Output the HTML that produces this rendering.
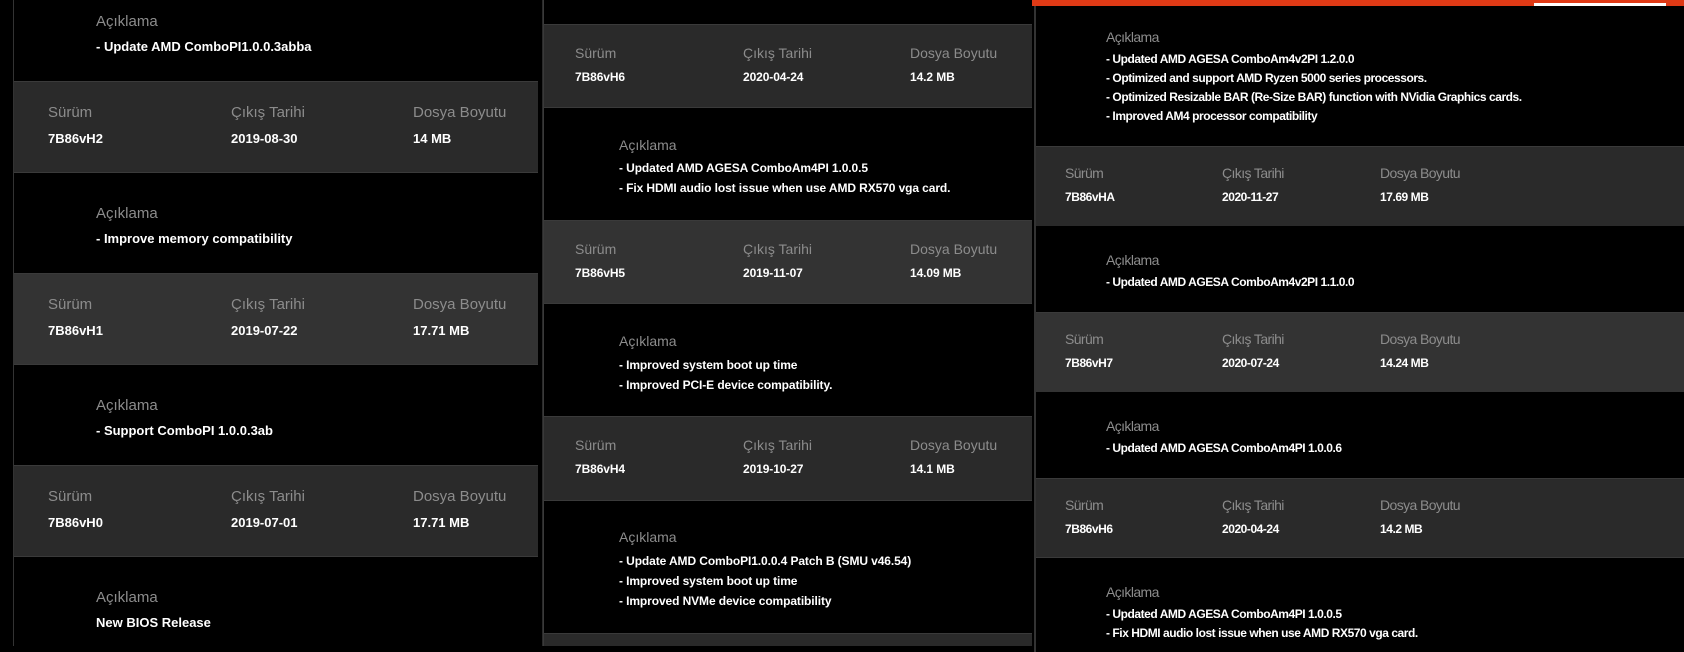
<!DOCTYPE html>
<html><head><meta charset="utf-8"><style>
*{margin:0;padding:0;box-sizing:border-box}
body{width:1684px;height:646px;background:#000;overflow:hidden;position:relative;font-family:"Liberation Sans",sans-serif}
.r{position:absolute;border-top:1px solid #3a3a3a}
.g{background:#2a2a2a}
.g2{background:#333}
.b{background:#000}
.t{position:absolute;white-space:nowrap;line-height:1}
.l{color:#8c8c8c}
.v{color:#fff;font-weight:bold}
.vl{position:absolute;top:0;height:646px;width:2px;background:#333}
</style></head><body>
<!-- panel 1 -->
<div class="vl" style="left:13px"></div>
<div class="r b" style="left:14px;top:0;width:524px;height:82px;border-top:none"></div>
<div class="r g" style="left:14px;top:81px;width:524px;height:92px"></div>
<div class="r b" style="left:14px;top:172px;width:524px;height:102px"></div>
<div class="r g2" style="left:14px;top:273px;width:524px;height:92px"></div>
<div class="r b" style="left:14px;top:364px;width:524px;height:102px"></div>
<div class="r g" style="left:14px;top:465px;width:524px;height:92px"></div>
<div class="r b" style="left:14px;top:556px;width:524px;height:90px"></div>
<div class="vl" style="left:542px;background:#2a2a2a"></div>

<div style="font-size:15px">
<div class="t l" style="left:96px;top:14px">Açıklama</div>
<div class="t l" style="left:48px;top:105px">Sürüm</div><div class="t l" style="left:231px;top:105px">Çıkış Tarihi</div><div class="t l" style="left:413px;top:105px">Dosya Boyutu</div>
<div class="t l" style="left:96px;top:206px">Açıklama</div>
<div class="t l" style="left:48px;top:297px">Sürüm</div><div class="t l" style="left:231px;top:297px">Çıkış Tarihi</div><div class="t l" style="left:413px;top:297px">Dosya Boyutu</div>
<div class="t l" style="left:96px;top:398px">Açıklama</div>
<div class="t l" style="left:48px;top:489px">Sürüm</div><div class="t l" style="left:231px;top:489px">Çıkış Tarihi</div><div class="t l" style="left:413px;top:489px">Dosya Boyutu</div>
<div class="t l" style="left:96px;top:590px">Açıklama</div>
</div>
<div style="font-size:13px">
<div class="t v" style="left:96px;top:40px">- Update AMD ComboPI1.0.0.3abba</div>
<div class="t v" style="left:48px;top:132px">7B86vH2</div><div class="t v" style="left:231px;top:132px">2019-08-30</div><div class="t v" style="left:413px;top:132px">14 MB</div>
<div class="t v" style="left:96px;top:232px">- Improve memory compatibility</div>
<div class="t v" style="left:48px;top:324px">7B86vH1</div><div class="t v" style="left:231px;top:324px">2019-07-22</div><div class="t v" style="left:413px;top:324px">17.71 MB</div>
<div class="t v" style="left:96px;top:424px">- Support ComboPI 1.0.0.3ab</div>
<div class="t v" style="left:48px;top:516px">7B86vH0</div><div class="t v" style="left:231px;top:516px">2019-07-01</div><div class="t v" style="left:413px;top:516px">17.71 MB</div>
<div class="t v" style="left:96px;top:616px">New BIOS Release</div>
</div>

<!-- panel 2 -->
<div class="vl" style="left:543px;width:1px;background:#3a3a3a"></div>
<div class="r g" style="left:544px;top:24px;width:488px;height:84px"></div>
<div class="r b" style="left:544px;top:107px;width:488px;height:114px"></div>
<div class="r g2" style="left:544px;top:220px;width:488px;height:84px"></div>
<div class="r b" style="left:544px;top:303px;width:488px;height:114px"></div>
<div class="r g" style="left:544px;top:416px;width:488px;height:85px"></div>
<div class="r b" style="left:544px;top:500px;width:488px;height:134px"></div>
<div class="r g" style="left:544px;top:633px;width:488px;height:13px"></div>
<div style="font-size:14px">
<div class="t l" style="left:575px;top:46px">Sürüm</div><div class="t l" style="left:743px;top:46px">Çıkış Tarihi</div><div class="t l" style="left:910px;top:46px">Dosya Boyutu</div>
<div class="t l" style="left:619px;top:138px">Açıklama</div>
<div class="t l" style="left:575px;top:242px">Sürüm</div><div class="t l" style="left:743px;top:242px">Çıkış Tarihi</div><div class="t l" style="left:910px;top:242px">Dosya Boyutu</div>
<div class="t l" style="left:619px;top:334px">Açıklama</div>
<div class="t l" style="left:575px;top:438px">Sürüm</div><div class="t l" style="left:743px;top:438px">Çıkış Tarihi</div><div class="t l" style="left:910px;top:438px">Dosya Boyutu</div>
<div class="t l" style="left:619px;top:530px">Açıklama</div>
</div>
<div style="font-size:12px;letter-spacing:-0.1px">
<div class="t v" style="left:575px;top:71px">7B86vH6</div><div class="t v" style="left:743px;top:71px">2020-04-24</div><div class="t v" style="left:910px;top:71px">14.2 MB</div>
<div class="t v" style="left:619px;top:162px">- Updated AMD AGESA ComboAm4PI 1.0.0.5</div>
<div class="t v" style="left:619px;top:182px">- Fix HDMI audio lost issue when use AMD RX570 vga card.</div>
<div class="t v" style="left:575px;top:267px">7B86vH5</div><div class="t v" style="left:743px;top:267px">2019-11-07</div><div class="t v" style="left:910px;top:267px">14.09 MB</div>
<div class="t v" style="left:619px;top:359px">- Improved system boot up time</div>
<div class="t v" style="left:619px;top:379px">- Improved PCI-E device compatibility.</div>
<div class="t v" style="left:575px;top:463px">7B86vH4</div><div class="t v" style="left:743px;top:463px">2019-10-27</div><div class="t v" style="left:910px;top:463px">14.1 MB</div>
<div class="t v" style="left:619px;top:555px">- Update AMD ComboPI1.0.0.4 Patch B (SMU v46.54)</div>
<div class="t v" style="left:619px;top:575px">- Improved system boot up time</div>
<div class="t v" style="left:619px;top:595px">- Improved NVMe device compatibility</div>
</div>

<!-- panel 3 -->
<div style="position:absolute;left:1032px;top:0;width:652px;height:6px;background:#e03a16"></div>
<div style="position:absolute;left:1534px;top:3px;width:132px;height:3px;background:#fff"></div>
<div class="vl" style="left:1034px;top:6px;width:2px;background:#333"></div>
<div class="r g" style="left:1036px;top:146px;width:648px;height:80px"></div>
<div class="r g2" style="left:1036px;top:312px;width:648px;height:80px"></div>
<div class="r g" style="left:1036px;top:478px;width:648px;height:80px"></div>
<div class="r b" style="left:1036px;top:557px;width:648px;height:89px"></div>
<div style="font-size:14px;letter-spacing:-0.6px">
<div class="t l" style="left:1106px;top:30px">Açıklama</div>
<div class="t l" style="left:1065px;top:166px">Sürüm</div><div class="t l" style="left:1222px;top:166px">Çıkış Tarihi</div><div class="t l" style="left:1380px;top:166px">Dosya Boyutu</div>
<div class="t l" style="left:1106px;top:253px">Açıklama</div>
<div class="t l" style="left:1065px;top:332px">Sürüm</div><div class="t l" style="left:1222px;top:332px">Çıkış Tarihi</div><div class="t l" style="left:1380px;top:332px">Dosya Boyutu</div>
<div class="t l" style="left:1106px;top:419px">Açıklama</div>
<div class="t l" style="left:1065px;top:498px">Sürüm</div><div class="t l" style="left:1222px;top:498px">Çıkış Tarihi</div><div class="t l" style="left:1380px;top:498px">Dosya Boyutu</div>
<div class="t l" style="left:1106px;top:585px">Açıklama</div>
</div>
<div style="font-size:12px;letter-spacing:-0.45px">
<div class="t v" style="left:1106px;top:53px">- Updated AMD AGESA ComboAm4v2PI 1.2.0.0</div>
<div class="t v" style="left:1106px;top:72px">- Optimized and support AMD Ryzen 5000 series processors.</div>
<div class="t v" style="left:1106px;top:91px">- Optimized Resizable BAR (Re-Size BAR) function with NVidia Graphics cards.</div>
<div class="t v" style="left:1106px;top:110px">- Improved AM4 processor compatibility</div>
<div class="t v" style="left:1065px;top:191px">7B86vHA</div><div class="t v" style="left:1222px;top:191px">2020-11-27</div><div class="t v" style="left:1380px;top:191px">17.69 MB</div>
<div class="t v" style="left:1106px;top:276px">- Updated AMD AGESA ComboAm4v2PI 1.1.0.0</div>
<div class="t v" style="left:1065px;top:357px">7B86vH7</div><div class="t v" style="left:1222px;top:357px">2020-07-24</div><div class="t v" style="left:1380px;top:357px">14.24 MB</div>
<div class="t v" style="left:1106px;top:442px">- Updated AMD AGESA ComboAm4PI 1.0.0.6</div>
<div class="t v" style="left:1065px;top:523px">7B86vH6</div><div class="t v" style="left:1222px;top:523px">2020-04-24</div><div class="t v" style="left:1380px;top:523px">14.2 MB</div>
<div class="t v" style="left:1106px;top:608px">- Updated AMD AGESA ComboAm4PI 1.0.0.5</div>
<div class="t v" style="left:1106px;top:627px">- Fix HDMI audio lost issue when use AMD RX570 vga card.</div>
</div>
</body></html>
